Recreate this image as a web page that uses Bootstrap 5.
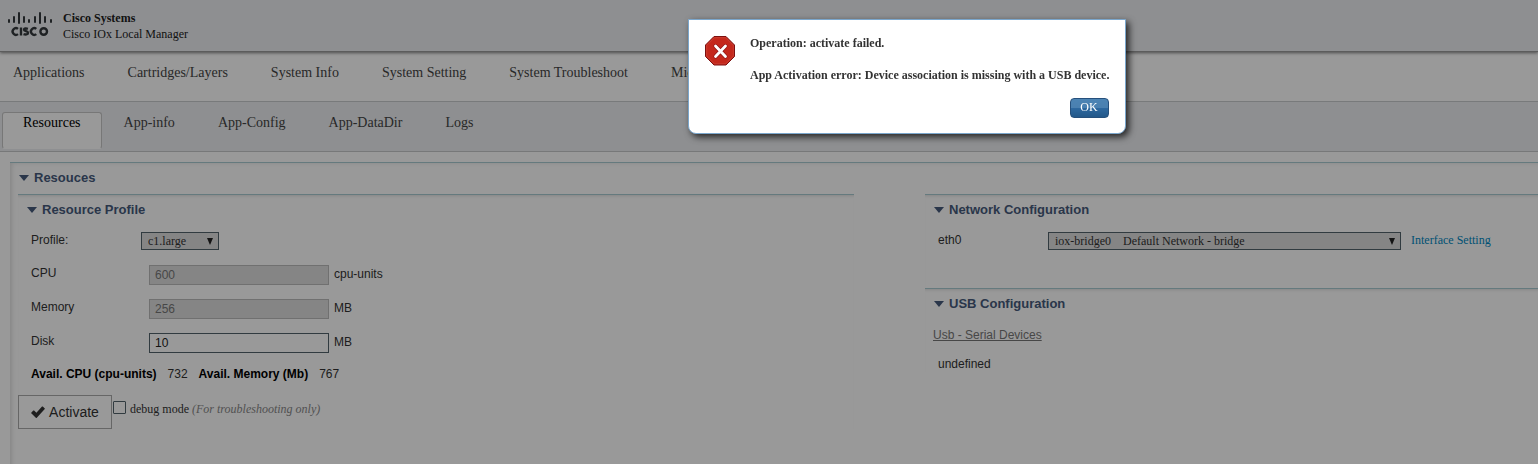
<!DOCTYPE html>
<html lang="en">
<head>
<meta charset="utf-8">
<meta name="viewport" content="width=device-width, initial-scale=1">
<title>Cisco IOx Local Manager</title>
<link href="https://cdn.jsdelivr.net/npm/bootstrap@5.3.0/dist/css/bootstrap.min.css" rel="stylesheet">
<style>
  body { font: 12px/16px "Liberation Serif", serif; color: #333; background: #fff; min-height: 100vh; overflow-x: hidden; }
  .topbar { height: 52px; background: #edeff2; border-bottom: 1px solid #999; box-shadow: 0 1px 3px rgba(0,0,0,.5); position: relative; padding: 0 7px; gap: 10px; color: #222; }
  .tabs a { color: #444; font-size: 14px; line-height: 20px; text-decoration: none; white-space: nowrap; }
  .main-tabs { height: 49px; padding: 11px 13px 0; gap: 43px; }
  .sub-tabs { height: 51px; background: #edeff2; border-top: 1px solid #c9cbce; border-bottom: 1px solid #c6c8ca; padding: 10px 2px 0; }
  .sub-tabs a { padding: 0 21px; height: 37px; border: 1px solid transparent; }
  .sub-tabs a + a { margin-right: -1px; }
  .sub-tabs a.active { color: #000; background: #fff; border-color: #c6c6c6; border-bottom-color: #fff; border-radius: 3px; padding: 0 20px; }
  .sheet { margin: 10px 0 0 10px; border-top: 1px solid #a9cbd3; min-height: 302px; padding: 0 0 0 8px; box-shadow: inset 5px 3px 4px -3px rgba(0,0,0,.12); font-family: "Liberation Sans", sans-serif; color: #333; }
  .section-title { font-size: 13px; line-height: 16px; font-weight: bold; color: #465a7c; margin: 0; display: flex; align-items: center; }
  .section-title::before { content: ""; border: 5px solid transparent; border-top: 6px solid #465a7c; border-bottom: 0; margin: 0 5px 0 1px; }
  .sheet > .section-title { padding: 7px 0 8px; height: 31px; }
  .panels { display: grid; grid-template-columns: 55% 1fr; column-gap: 71px; }
  .panel { border-top: 1px solid #a9cbd3; box-shadow: inset 0 3px 3px -2px rgba(0,0,0,.12); padding-top: 7px; }
  .panel .section-title { padding-left: 8px; }
  .net { height: 94px; }
  .field-row { display: flex; align-items: flex-start; padding-left: 13px; }
  .field-row label:first-child { width: 110px; }
  .first-row { margin-top: 14px; height: 33px; }
  .numeric { height: 34px; }
  .numeric + .readings { margin-top: -1px; }
  .unit { margin: 1px 0 0 5px; }
  .picker { font: 12px/16px "Liberation Serif", serif; height: 18px; border: 1px solid #52636b; border-radius: 0; padding: 0 6px; color: #333; appearance: none;
    background: #dedede url("data:image/svg+xml,%3Csvg xmlns='http://www.w3.org/2000/svg' width='7' height='7'%3E%3Cpath d='M0 0h6L3 7z' fill='%23222'/%3E%3C/svg%3E") no-repeat right 4px top 5px; }
  .profile-picker { width: 78px; }
  .net-picker { width: 353px; }
  .amount { width: 180px; height: 20px; margin-left: 8px; border: 1px solid #52636b; background: #fff; padding: 0 5px; color: #222; font: 12px/16px "Liberation Sans", sans-serif; }
  .amount:disabled { background: #dedede; border-color: #bbb; color: #777; }
  .readings { height: 29px; }
  .readings b { color: #000; }
  .readings span { margin: 0 11px; }
  .run-btn { border: 1px solid #aaa; border-radius: 0; background: #fff; color: #333; width: 94px; height: 34px; padding: 0; font: 14px/20px "Liberation Sans", sans-serif; }
  .debug { font-family: "Liberation Serif", serif; padding-top: 6px; margin-left: 1px; }
  .debug input { appearance: none; width: 13px; height: 13px; border: 1px solid #52636b; margin: 0 4px 0 0; border-radius: 1px; }
  .debug em { color: #888; }
  .if-link { font-family: "Liberation Serif", serif; color: #0088c2; text-decoration: none; margin-left: 10px; }
  .usb-link { color: #777; margin-left: 8px; }
  .usb-heading { margin-top: 15px; }
  .usb-status { margin-top: 13px; }
  .modal-backdrop.show { opacity: .4; }
  .alert-box { position: absolute; z-index: 1060; top: 19px; left: 688px; background: #fff; border: 1px solid #7ba7cd; border-radius: 0 0 8px 8px; box-shadow: 3px 3px 7px rgba(0,0,0,.75); padding: 15px 16px 15px 15px; color: #333; font-weight: bold; white-space: nowrap; }
  .alert-main { gap: 14px; min-height: 63px; }
  .ok-btn { display: block; margin-left: auto; width: 39px; height: 20px; padding: 0 2px 2px 0; border: 1px solid #26507c; border-radius: 4px; color: #fff; font: 12px/16px "Liberation Serif", serif; background: linear-gradient(#4c84b4 0, #4a80b0 48%, #2d689f 52%, #235889 100%); }
</style>
</head>
<body>
<header class="topbar d-flex align-items-center">
  <svg width="46" height="27" viewBox="0 0 46 27" role="img" aria-label="Cisco" fill="none" stroke="#353a3d">
    <path stroke-width="2" stroke-linecap="round" d="M2 8v2M7 5v5M12 1v10M17 5v5M22 8v2M28 5v5M33 1v10M38 5v5M44 8v2"/>
    <path stroke-width="2.400" d="M11 16.900a3.300 3.300 0 1 0 0 5.200M14 15.500v8M20.900 16.800c-2-.7-3.900-.4-3.900.9 0 2 4 1 4 3.200 0 1.800-2.600 1.900-4.500 1.200M29.300 16.900a3.300 3.300 0 1 0 0 5.200"/>
    <circle cx="36.700" cy="19.500" r="3.300" stroke-width="2.400"/>
  </svg>
  <div><b>Cisco Systems</b><br>Cisco IOx Local Manager</div>
</header>
<nav class="tabs main-tabs d-flex" aria-label="Main">
  <a href="#">Applications</a><a href="#">Cartridges/Layers</a><a href="#">System Info</a><a href="#">System Setting</a><a href="#">System Troubleshoot</a><a href="#">Middleware</a>
</nav>
<nav class="tabs sub-tabs d-flex" aria-label="Application">
  <a href="#" class="active">Resources</a><a href="#">App-info</a><a href="#">App-Config</a><a href="#">App-DataDir</a><a href="#">Logs</a>
</nav>
<main class="sheet">
  <h2 class="section-title">Resouces</h2>
  <div class="panels">
    <section class="panel">
      <h3 class="section-title">Resource Profile</h3>
      <form>
        <div class="field-row first-row">
          <label for="profile">Profile:</label>
          <select id="profile" class="picker profile-picker"><option>c1.large</option></select>
        </div>
        <div class="field-row numeric">
          <label for="cpu">CPU</label><input id="cpu" class="amount" value="600" disabled><span class="unit">cpu-units</span>
        </div>
        <div class="field-row numeric">
          <label for="memory">Memory</label><input id="memory" class="amount" value="256" disabled><span class="unit">MB</span>
        </div>
        <div class="field-row numeric">
          <label for="disk">Disk</label><input id="disk" class="amount" value="10"><span class="unit">MB</span>
        </div>
        <div class="field-row readings">
          <b>Avail. CPU (cpu-units)</b><span>732</span><b>Avail. Memory (Mb)</b><span>767</span>
        </div>
        <div class="d-flex align-items-start">
          <button type="button" class="run-btn d-flex align-items-center justify-content-center"><svg class="me-1" width="14" height="13" viewBox="0 0 14 13" aria-hidden="true"><path fill="#333" d="M0 7 2.300 4.600q.4-.4.8 0L5.400 6.800 11 .6q.4-.4.8 0L14 2.700 5.800 11.700q-.5.500-1 0z"/></svg>Activate</button>
          <label class="debug d-flex"><input type="checkbox"><span>debug mode <em>(For troubleshooting only)</em></span></label>
        </div>
      </form>
    </section>
    <div>
      <section class="panel net">
        <h3 class="section-title">Network Configuration</h3>
        <div class="field-row first-row">
          <label for="eth0">eth0</label>
          <select id="eth0" class="picker net-picker"><option>iox-bridge0 &nbsp;&nbsp; Default Network - bridge</option></select>
          <a href="#" class="if-link">Interface Setting</a>
        </div>
      </section>
      <section class="panel">
        <h3 class="section-title">USB Configuration</h3>
        <div class="usb-heading"><a href="#" class="usb-link">Usb - Serial Devices</a></div>
        <div class="field-row usb-status">undefined</div>
      </section>
    </div>
  </div>
</main>
<div class="modal-backdrop show"></div>
<div class="alert-box" role="alertdialog" aria-labelledby="alert-text">
  <div class="alert-main d-flex align-items-start">
    <svg width="32" height="32" viewBox="0 0 32 32" aria-hidden="true">
      <path d="M10 1.500h12l8.500 8.500v11.500L22 30H10l-8.500-8.500V10z" fill="#c4281c" stroke="#7c1010"/>
      <path d="M10.500 2.700h11L29.300 10.500v10.500L21.500 28.800h-11L2.700 21V10.500z" fill="none" stroke="#dc6a5c" stroke-opacity=".3"/>
      <path d="m11.500 11 10 10.500m0-10.500-10 10.500" stroke="#8c1414" stroke-width="4" stroke-linecap="round"/>
      <path d="m11.500 11 10 10.500m0-10.500-10 10.500" stroke="#fff" stroke-width="2.800" stroke-linecap="round"/>
    </svg>
    <div id="alert-text">Operation: activate failed.<br><br>App Activation error: Device association is missing with a USB device.</div>
  </div>
  <button type="button" class="ok-btn">OK</button>
</div>
<script src="https://cdn.jsdelivr.net/npm/bootstrap@5.3.0/dist/js/bootstrap.bundle.min.js"></script>
</body>
</html>
